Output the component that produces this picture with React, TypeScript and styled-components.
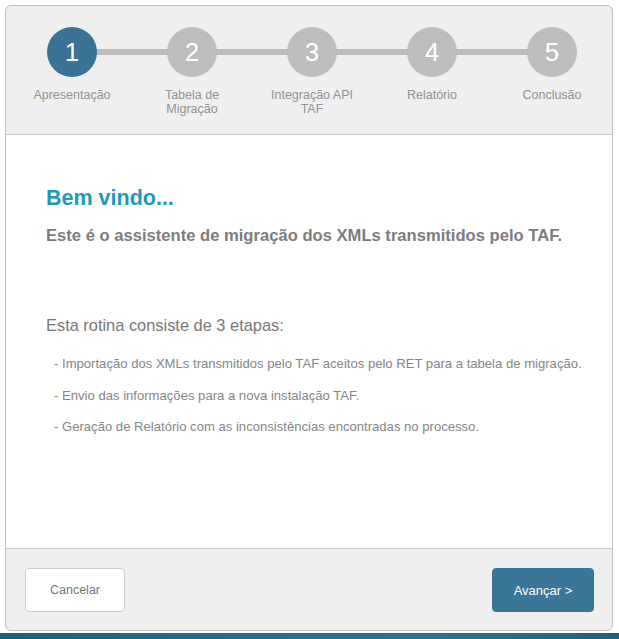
import React from "react";
import styled, { createGlobalStyle } from "styled-components";

const GlobalStyle = createGlobalStyle`
    html, body {
        margin: 0;
        padding: 0;
        background: #ffffff;
        font-family: "Liberation Sans", Arial, sans-serif;
    }
`;

const Page = styled.div`
    display: flex;
    flex-direction: column;
    width: 619px;
    height: 639px;
    overflow: hidden;
`;

const Panel = styled.div`
    display: flex;
    flex-direction: column;
    margin: 5px 6px 0 5px;
    height: 627px;
    box-sizing: border-box;
    border: 1px solid #bdbdbd;
    border-radius: 6px;
    overflow: hidden;
    background: #efefef;
`;

const Header = styled.div`
    height: 129px;
    padding: 21px 0 0 6px;
    box-sizing: border-box;
    border-bottom: 1px solid #c9c9c9;
    display: flex;
`;

const Step = styled.div<{ $last?: boolean }>`
    width: 120px;
    display: flex;
    flex-direction: column;
    align-items: center;
    position: relative;

    &::after {
        content: "";
        display: ${(p) => (p.$last ? "none" : "block")};
        position: absolute;
        top: 22px;
        left: 84px;
        width: 72px;
        height: 6px;
        background: #bdbdbd;
    }
`;

const Circle = styled.div<{ $active?: boolean }>`
    width: 50px;
    height: 50px;
    border-radius: 50%;
    background: ${(p) => (p.$active ? "#3a7396" : "#bdbdbd")};
    color: #ffffff;
    font-size: 26px;
    display: flex;
    align-items: center;
    justify-content: center;
    position: relative;
    z-index: 1;
`;

const StepLabel = styled.div`
    margin-top: 11px;
    font-size: 12.5px;
    line-height: 14px;
    color: #939393;
    text-align: center;
    width: 110px;
`;

const Body = styled.div`
    flex: 1;
    background: #ffffff;
    padding: 50px 30px 0 40px;
`;

const Title = styled.h1`
    margin: 0;
    font-size: 21.5px;
    line-height: 26px;
    font-weight: bold;
    color: #1f98ba;
`;

const Subtitle = styled.p`
    margin: 15px 0 0;
    font-size: 16.6px;
    line-height: 20px;
    font-weight: bold;
    color: #7d7d7d;
    white-space: nowrap;
`;

const Intro = styled.p`
    margin: 69px 0 0;
    font-size: 16.4px;
    line-height: 20px;
    color: #777777;
`;

const StepList = styled.ul`
    list-style: none;
    margin: 21px 0 0;
    padding: 0 0 0 8px;
    display: flex;
    flex-direction: column;
    gap: 15.5px;
`;

const StepItem = styled.li`
    font-size: 13.1px;
    line-height: 16px;
    color: #868686;
    white-space: nowrap;
`;

const Footer = styled.div`
    height: 82px;
    box-sizing: border-box;
    border-top: 1px solid #c9c9c9;
    padding: 19px 18px 0 19px;
    display: flex;
    justify-content: space-between;
    align-items: flex-start;
`;

const Button = styled.button<{ $primary?: boolean }>`
    height: 44px;
    width: ${(p) => (p.$primary ? "102px" : "100px")};
    border-radius: 4px;
    border: 1px solid ${(p) => (p.$primary ? "#3a7396" : "#cccccc")};
    background: ${(p) => (p.$primary ? "#3b7597" : "#ffffff")};
    color: ${(p) => (p.$primary ? "#ffffff" : "#777777")};
    font-family: "Liberation Sans", Arial, sans-serif;
    font-size: ${(p) => (p.$primary ? "13px" : "12.5px")};
    cursor: pointer;
    padding: 0;
`;

const Taskbar = styled.div`
    margin-top: 2px;
    height: 6px;
    background: linear-gradient(90deg, #1f5f7e 0%, #2a6c8c 40%, #2e7190 70%, #22627f 100%);
`;

const steps = [
    ["Apresentação"],
    ["Tabela de", "Migração"],
    ["Integração API", "TAF"],
    ["Relatório"],
    ["Conclusão"],
];

const App = () => {
    return (
        <Page>
            <GlobalStyle />
            <Panel>
                <Header>
                    {steps.map((lines, i) => (
                        <Step key={i} $last={i === steps.length - 1}>
                            <Circle $active={i === 0}>{i + 1}</Circle>
                            <StepLabel>
                                {lines.map((l) => (
                                    <div key={l}>{l}</div>
                                ))}
                            </StepLabel>
                        </Step>
                    ))}
                </Header>
                <Body>
                    <Title>Bem vindo...</Title>
                    <Subtitle>Este é o assistente de migração dos XMLs transmitidos pelo TAF.</Subtitle>
                    <Intro>Esta rotina consiste de 3 etapas:</Intro>
                    <StepList>
                        <StepItem>- Importação dos XMLs transmitidos pelo TAF aceitos pelo RET para a tabela de migração.</StepItem>
                        <StepItem>- Envio das informações para a nova instalação TAF.</StepItem>
                        <StepItem>- Geração de Relatório com as inconsistências encontradas no processo.</StepItem>
                    </StepList>
                </Body>
                <Footer>
                    <Button>Cancelar</Button>
                    <Button $primary>Avançar &gt;</Button>
                </Footer>
            </Panel>
            <Taskbar />
        </Page>
    );
};

export default App;
